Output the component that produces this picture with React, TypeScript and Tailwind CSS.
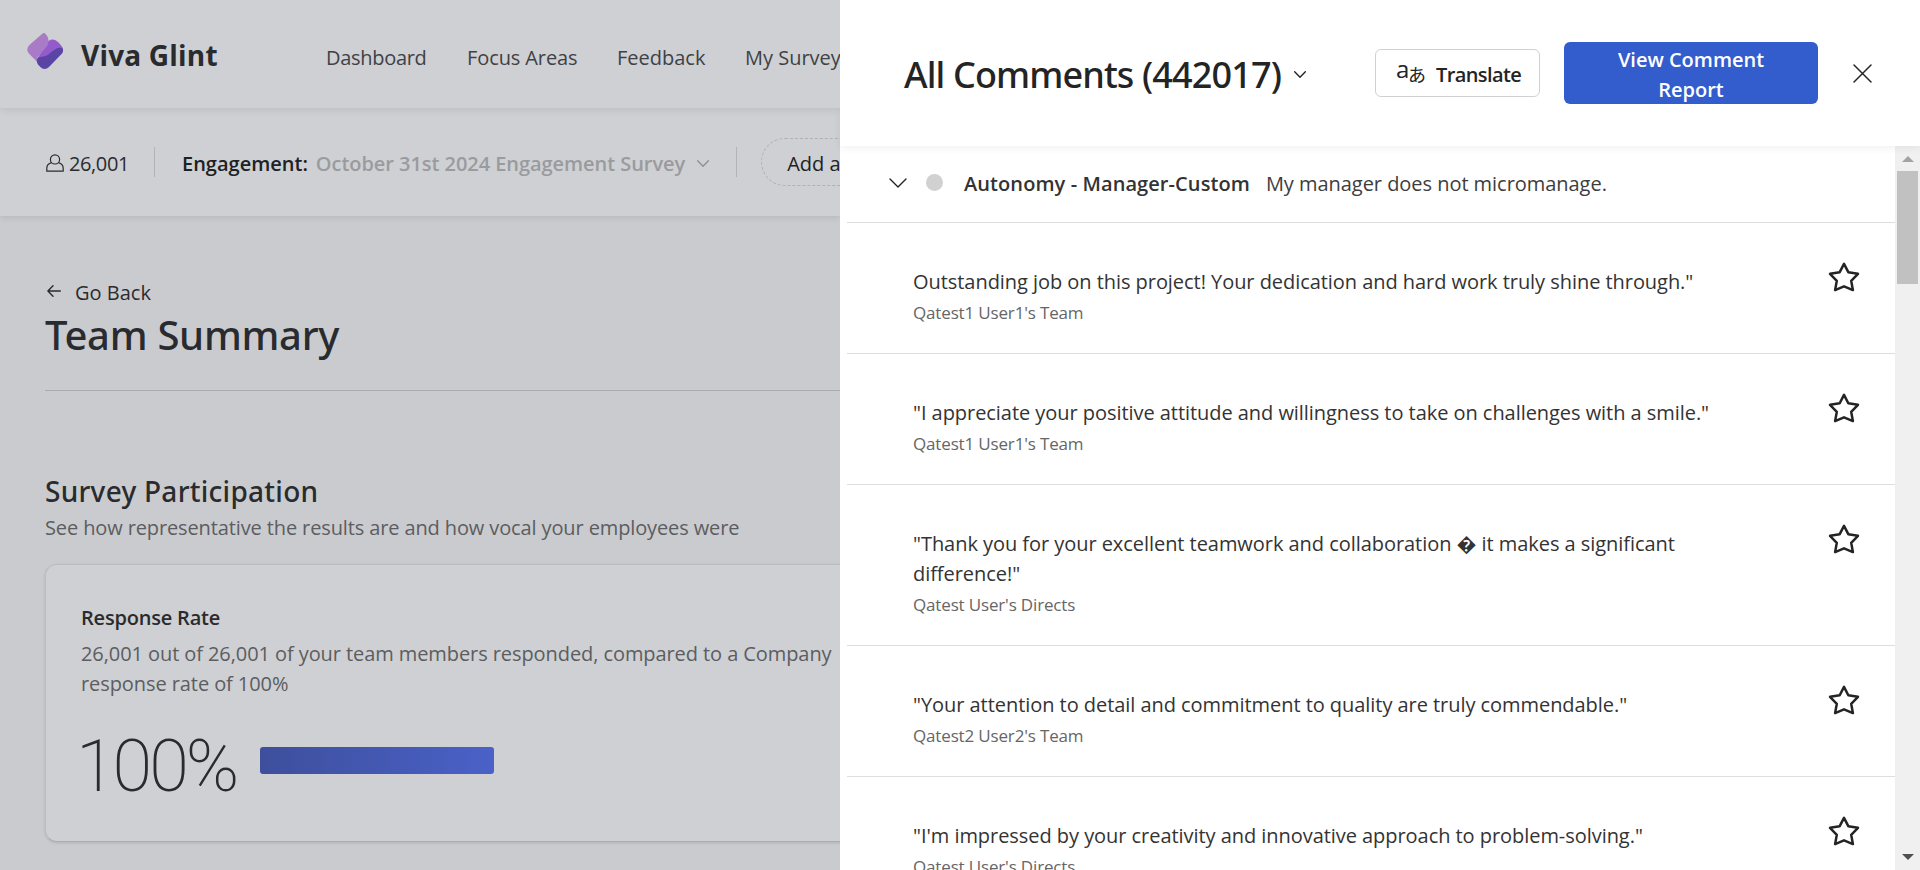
import type { ReactNode } from "react";

const comments = [
  { text: 'Outstanding job on this project! Your dedication and hard work truly shine through."', team: "Qatest1 User1's Team" },
  { text: '"I appreciate your positive attitude and willingness to take on challenges with a smile."', team: "Qatest1 User1's Team" },
  { text: '"Thank you for your excellent teamwork and collaboration \uFFFD it makes a significant difference!"', team: "Qatest User's Directs" },
  { text: '"Your attention to detail and commitment to quality are truly commendable."', team: "Qatest2 User2's Team" },
  { text: '"I\'m impressed by your creativity and innovative approach to problem-solving."', team: "Qatest User's Directs" },
];

function Logo() {
  return (
    <svg className="h-9 w-9 shrink-0" viewBox="21 24 108 108">
      <path d="M78 58C82 48 92 43 101 44C107 45 111 48 115 52L124 62C132 71 130 78 122 86L80 118L50 104Z" fill="#945bcc" />
      <path d="M66 27Q72 21 77 27Q86 36 86 48Q86 60 76 70L58 90Q50 98 51 110L28 87Q15 73 29 59Z" fill="#a97bc6" />
      <path d="M51 112C49 101 54 95 66 95C78 94 86 89 94 81L108 71C116 66 125 68 129 72C130 80 128 85 121 91L87 126C79 133 69 134 61 126C56 121 52 118 51 112Z" fill="#5a45a5" />
    </svg>
  );
}

function Chevron({ className }: { className: string }) {
  return (
    <svg className={className} viewBox="0 0 18 10" fill="none" stroke="currentColor" strokeWidth="1.4" strokeLinecap="round" strokeLinejoin="round">
      <path d="M1 1L9 9L17 1" vectorEffect="non-scaling-stroke" />
    </svg>
  );
}

function Star() {
  return (
    <svg className="h-[30px] w-8 shrink-0" viewBox="0 0 32 30" fill="none" stroke="#242424" strokeWidth="2.5" strokeLinejoin="round">
      <path d="M16 1.9L20.3 10.2L30 11.8L23.2 18.8L24.9 28.1L16 24.3L7.1 28.1L8.8 18.8L2 11.8L11.7 10.2Z" />
    </svg>
  );
}

function NavItem({ children, className }: { children: ReactNode; className: string }) {
  return <a className={`whitespace-nowrap text-xl leading-[30px] text-[#404145] ${className}`}>{children}</a>;
}

function Page() {
  return (
    <div className="flex h-full w-[840px] shrink-0 flex-col overflow-hidden bg-[#cacbcf] text-[#2a2b2e]">
      <header className="z-20 flex h-[108px] shrink-0 items-start bg-[#ced0d3] pl-[27px] shadow-[0_2px_8px_rgba(0,0,0,0.09)]">
        <div className="flex w-[299px] shrink-0 items-start gap-[18px] pt-[33px]">
          <Logo />
          <span className="mt-[3px] text-[28px] leading-[38px] font-bold tracking-[0.2px]">Viva Glint</span>
        </div>
        <nav className="flex pt-[43px]">
          <NavItem className="w-[141px] tracking-[-0.3px]">Dashboard</NavItem>
          <NavItem className="w-[150px] tracking-[-0.1px]">Focus Areas</NavItem>
          <NavItem className="w-32">Feedback</NavItem>
          <NavItem>My Survey</NavItem>
        </nav>
      </header>

      <div className="z-10 flex h-[108px] shrink-0 items-center bg-[#ced0d3] pl-[46px] text-xl leading-[30px] shadow-[0_2px_6px_rgba(0,0,0,0.09)]">
        <svg className="mt-0.5 h-[18px] w-[18px] shrink-0" viewBox="0 0 18 18" fill="none" stroke="#2a2b2e" strokeWidth="1.2">
          <circle cx="9" cy="5.4" r="4.6" />
          <path d="M5.6 8.6C2.6 9.4 0.8 11 0.8 14.2V17.2H17.2V14.2C17.2 11 15.4 9.4 12.4 8.6" strokeLinejoin="round" />
        </svg>
        <span className="ml-[5px] w-[85px] shrink-0 pt-1 tracking-[-0.4px]">26,001</span>
        <span className="h-[30px] w-px shrink-0 bg-[#b3b4b8]" />
        <span className="ml-[27px] shrink-0 pt-1 font-semibold text-[#202124]">Engagement:</span>
        <span className="ml-2 shrink-0 pt-1 font-semibold tracking-[-0.05px] whitespace-nowrap text-[#9a9b9e]">October 31st 2024 Engagement Survey</span>
        <Chevron className="mt-0.5 ml-3 h-[7px] w-3 shrink-0 text-[#8f9093]" />
        <span className="ml-[27px] h-[30px] w-px shrink-0 bg-[#b3b4b8]" />
        <span className="ml-6 flex h-12 w-[150px] shrink-0 items-center rounded-full border border-dashed border-[#b0b1b5] pt-1 pl-[25px] text-[#202124]">Add a</span>
      </div>

      <main className="w-[1000px] pt-[62px] pl-[45px]">
        <a className="flex items-center gap-[14px] text-xl leading-[30px]">
          <svg className="-mt-1 ml-[2px] h-3 w-[14px]" viewBox="0 0 14 12" fill="none" stroke="currentColor" strokeWidth="1.4" strokeLinecap="round" strokeLinejoin="round">
            <path d="M6 0.8L0.9 6L6 11.2M0.9 6H13.3" />
          </svg>
          Go Back
        </a>
        <h1 className="mt-[3px] font-['Noto_Sans'] text-[40px] leading-[48px] font-medium tracking-[-0.28px]">Team Summary</h1>
        <hr className="mt-[31px] border-0 border-t border-[#a9abb0]" />
        <h2 className="mt-[82px] font-['Noto_Sans'] text-[28px] leading-9 font-medium tracking-[0.27px]">Survey Participation</h2>
        <p className="mt-1 text-xl leading-[30px] tracking-[-0.12px] text-[#5c5d60]">See how representative the results are and how vocal your employees were</p>

        <section className="mt-[21px] h-[278px] rounded-xl border border-[#bcbdc1] border-b-[#adaeb2] bg-[#ced0d3] px-[35px] pt-[38px] shadow-[0_1px_3px_rgba(0,0,0,0.12)]">
          <h3 className="text-xl leading-[30px] font-semibold tracking-[-0.2px]">Response Rate</h3>
          <p className="mt-1.5 text-xl leading-[30px] tracking-[-0.08px] text-[#5c5d60]">
            26,001 out of 26,001 of your team members responded, compared to a Company
            <br />
            response rate of 100%
          </p>
          <div className="mt-[28px] flex items-start">
            <span className="-ml-[5px] w-[184px] font-[Roboto] text-[72px] leading-[80px] font-extralight tracking-[-3px]">100%</span>
            <div className="mt-[20px] h-[27px] w-[234px] rounded-[3px] bg-gradient-to-r from-[#3d4f9c] to-[#4a61c8]" />
          </div>
        </section>
      </main>
    </div>
  );
}

function Scrollbar() {
  return (
    <div className="flex w-[25px] shrink-0 flex-col items-center bg-[#f0f0f0]">
      <svg className="mt-2.5 h-1.5 w-3 shrink-0" viewBox="0 0 12 6"><path d="M6 0L12 6H0Z" fill="#a3a3a3" /></svg>
      <div className="mt-[9px] h-[113px] w-[21px] shrink-0 bg-[#c1c1c1]" />
      <svg className="mt-auto mb-2.5 h-1.5 w-3 shrink-0" viewBox="0 0 12 6"><path d="M0 0H12L6 6Z" fill="#505050" /></svg>
    </div>
  );
}

function CommentsDrawer() {
  return (
    <aside className="flex h-full min-w-0 flex-1 flex-col bg-white text-[#242424]">
      <header className="z-10 flex h-[146px] shrink-0 items-center bg-white pl-16 shadow-[0_2px_8px_rgba(0,0,0,0.06)]">
        <h2 className="pt-1 font-['Noto_Sans'] text-4xl leading-[44px] font-medium tracking-[-0.87px] whitespace-nowrap">All Comments (442017)</h2>
        <Chevron className="mt-0.5 ml-[13px] h-[7px] w-3 shrink-0" />
        <button className="ml-auto flex h-12 w-[165px] shrink-0 items-center rounded-md border border-[#d1d1d1] pl-5">
          <span className="-mt-[9px] w-3 text-[24px] leading-[30px]">a</span>
          <span className="mt-0.5 w-[18px] font-['Noto_Sans_CJK_JP',sans-serif] text-[18px] leading-[26px]">あ</span>
          <span className="ml-2.5 pt-1 text-xl leading-[30px] font-semibold tracking-[-0.6px]">Translate</span>
        </button>
        <button className="ml-6 flex h-[62px] w-[254px] shrink-0 items-center justify-center rounded-md bg-[#335ccd] px-12 pt-1 text-xl leading-[30px] font-semibold text-white">
          View Comment Report
        </button>
        <svg className="mr-12 ml-[35px] h-[19px] w-[19px] shrink-0" viewBox="0 0 19 19" fill="none" stroke="#242424" strokeWidth="1.5" strokeLinecap="round">
          <path d="M1 1L18 18M18 1L1 18" />
        </svg>
      </header>

      <div className="flex min-h-0 flex-1">
        <div className="min-w-0 flex-1 overflow-hidden pl-[7px]">
          <div className="flex h-[76px] items-center pl-[42px] text-xl leading-[30px]">
            <Chevron className="-mt-0.5 h-[10px] w-[18px] shrink-0" />
            <span className="-mt-1 ml-[19px] h-[17px] w-[17px] shrink-0 rounded-full bg-[#d1d1d1]" />
            <span className="ml-[21px] font-semibold tracking-[0.08px] text-[#333333]">Autonomy - Manager-Custom</span>
            <span className="ml-4 tracking-[-0.04px] text-[#3d3d3d]">My manager does not micromanage.</span>
          </div>
          {comments.map((comment) => (
            <article key={comment.text} className="flex items-start justify-between border-t border-[#dedede] pr-[35px] pb-[28px] pl-[66px]">
              <div className="w-[810px] pt-[44px]">
                <p className="text-xl leading-[30px] tracking-[-0.05px] text-[#333333]">{comment.text}</p>
                <p className="mt-1 text-[17px] leading-6 tracking-[-0.16px] text-[#666666]">{comment.team}</p>
              </div>
              <span className="pt-[39px]"><Star /></span>
            </article>
          ))}
        </div>
        <Scrollbar />
      </div>
    </aside>
  );
}

export default function App() {
  return (
    <div className="flex h-[870px] w-[1920px] overflow-hidden font-['Open_Sans','Noto_Sans',sans-serif]">
      <Page />
      <CommentsDrawer />
    </div>
  );
}
